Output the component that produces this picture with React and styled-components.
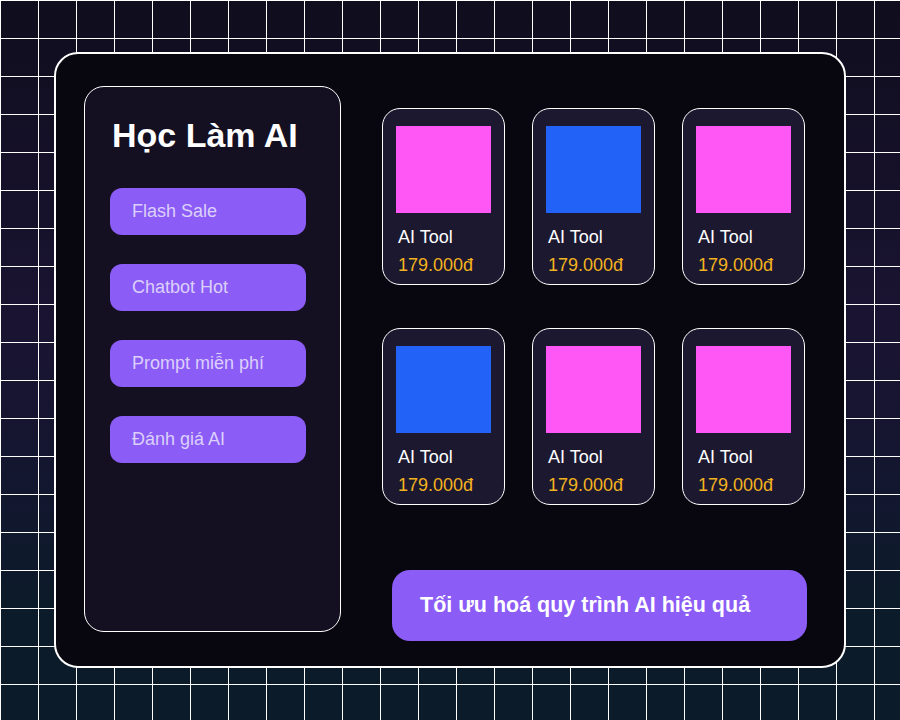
import React from 'react';
import styled, { createGlobalStyle } from 'styled-components';

const GlobalStyle = createGlobalStyle`
  html, body {
    margin: 0;
    padding: 0;
  }
  body {
    font-family: "Liberation Sans", Arial, sans-serif;
    background: #0b1a28;
  }
`;

const Page = styled.div`
  box-sizing: border-box;
  width: 900px;
  height: 720px;
  padding: 52px 54px;
  background-color: #120f22;
  background-image:
    linear-gradient(to right, transparent 37px, #ffffff 37px, #ffffff 38px),
    linear-gradient(to bottom, transparent 37px, #ffffff 37px, #ffffff 38px),
    linear-gradient(180deg, #100d1e 0%, #1a1432 45%, #141630 65%, #0b1b29 85%, #0b1b29 100%);
  background-size: 38px 38px, 38px 38px, 100% 100%;
  background-position: 1px 1px, 1px 1px, 0 0;
`;

const Panel = styled.div`
  box-sizing: border-box;
  width: 792px;
  height: 616px;
  display: flex;
  padding: 32px 28px;
  background: #08070f;
  border: 2px solid #ffffff;
  border-radius: 24px;
`;

const Sidebar = styled.aside`
  box-sizing: border-box;
  width: 257px;
  height: 546px;
  flex-shrink: 0;
  display: flex;
  flex-direction: column;
  padding: 29px 25px;
  background: #141022;
  border: 1px solid #ffffff;
  border-radius: 20px;
`;

const Title = styled.h1`
  margin: 0 0 34px 2px;
  font-size: 34px;
  line-height: 38px;
  font-weight: 700;
  color: #ffffff;
`;

const Menu = styled.div`
  display: flex;
  flex-direction: column;
  gap: 29px;
`;

const MenuButton = styled.button`
  box-sizing: border-box;
  width: 196px;
  height: 47px;
  display: flex;
  align-items: center;
  padding: 0 22px;
  border: none;
  border-radius: 12px;
  background: #8b5cf6;
  color: #dcd0fb;
  font-family: inherit;
  font-size: 18px;
  text-align: left;
`;

const Content = styled.main`
  display: flex;
  flex-direction: column;
  margin-left: 41px;
  padding-top: 22px;
`;

const Grid = styled.div`
  display: grid;
  grid-template-columns: repeat(3, 123px);
  column-gap: 27px;
  row-gap: 43px;
`;

const Card = styled.div`
  box-sizing: border-box;
  width: 123px;
  height: 177px;
  padding: 17px 13px 0;
  background: #1b1830;
  border: 1px solid #ffffff;
  border-radius: 18px;
`;

const Thumb = styled.div`
  width: 95px;
  height: 87px;
  background: ${({ $color }) => $color};
`;

const CardName = styled.div`
  margin: 14px 0 0 2px;
  font-size: 18px;
  line-height: 20px;
  color: #ffffff;
`;

const Price = styled.div`
  margin: 8px 0 0 2px;
  font-size: 18px;
  line-height: 20px;
  color: #f4b21f;
`;

const Banner = styled.div`
  box-sizing: border-box;
  flex-shrink: 0;
  width: 415px;
  height: 71px;
  margin: 65px 0 0 10px;
  display: flex;
  align-items: center;
  padding: 0 28px;
  background: #8b5cf6;
  border-radius: 18px;
  color: #ffffff;
  font-size: 21.5px;
  font-weight: 700;
`;

const PINK = '#ff57f5';
const BLUE = '#2262f6';

const menu = ['Flash Sale', 'Chatbot Hot', 'Prompt miễn phí', 'Đánh giá AI'];
const products = [PINK, BLUE, PINK, BLUE, PINK, PINK];

const App = () => (
  <Page>
    <GlobalStyle />
    <Panel>
      <Sidebar>
        <Title>Học Làm AI</Title>
        <Menu>
          {menu.map(label => (
            <MenuButton key={label} type="button">
              {label}
            </MenuButton>
          ))}
        </Menu>
      </Sidebar>
      <Content>
        <Grid>
          {products.map((color, i) => (
            <Card key={i}>
              <Thumb $color={color} />
              <CardName>AI Tool</CardName>
              <Price>179.000đ</Price>
            </Card>
          ))}
        </Grid>
        <Banner>Tối ưu hoá quy trình AI hiệu quả</Banner>
      </Content>
    </Panel>
  </Page>
);

export default App;
